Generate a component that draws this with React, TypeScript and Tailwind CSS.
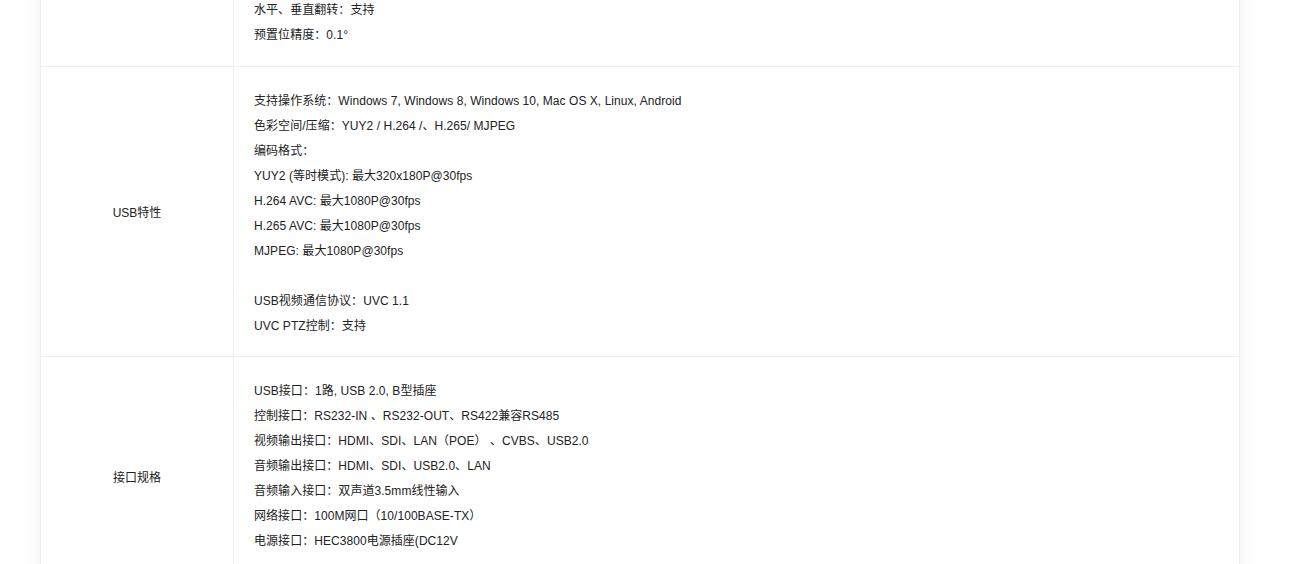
import React from "react";

type Row = { label: string; lines: string[] };

const rows: Row[] = [
  {
    label: "",
    lines: ["水平、垂直翻转：支持", "预置位精度：0.1°"],
  },
  {
    label: "USB特性",
    lines: [
      "支持操作系统：Windows 7, Windows 8, Windows 10, Mac OS X, Linux, Android",
      "色彩空间/压缩：YUY2 / H.264 /、H.265/ MJPEG",
      "编码格式：",
      "YUY2 (等时模式): 最大320x180P@30fps",
      "H.264 AVC: 最大1080P@30fps",
      "H.265 AVC: 最大1080P@30fps",
      "MJPEG: 最大1080P@30fps",
      "",
      "USB视频通信协议：UVC 1.1",
      "UVC PTZ控制：支持",
    ],
  },
  {
    label: "接口规格",
    lines: [
      "USB接口：1路, USB 2.0, B型插座",
      "控制接口：RS232-IN 、RS232-OUT、RS422兼容RS485",
      "视频输出接口：HDMI、SDI、LAN（POE） 、CVBS、USB2.0",
      "音频输出接口：HDMI、SDI、USB2.0、LAN",
      "音频输入接口：双声道3.5mm线性输入",
      "网络接口：100M网口（10/100BASE-TX）",
      "电源接口：HEC3800电源插座(DC12V",
      "",
    ],
  },
];

export default function App() {
  return (
    <div
      className="h-[564px] overflow-hidden bg-white text-[12px] text-[#222]"
      style={{ fontFamily: '"Liberation Sans", Arial, "Noto Sans CJK SC", sans-serif' }}
    >
      <div className="ml-[40px] -mt-[24px] w-[1200px] border-x border-[#eee] bg-white shadow-[0_0_20px_rgba(0,0,0,0.06)]">
        {rows.map((row, i) => (
          <div key={i} className="flex border-b border-[#eee]">
            <div className="flex w-[193px] shrink-0 items-center justify-center border-r border-[#eee] pt-[2px]">
              {row.label}
            </div>
            <div
              className={
                i === 1
                  ? "flex-1 pl-5 pt-[22px] pb-[17px] tracking-[0.05px]"
                  : "flex-1 pl-5 pt-[22px] pb-[18px] tracking-[0.05px]"
              }
            >
              {row.lines.map((line, j) => (
                <p key={j} className="h-[25px] leading-[25px]">
                  {line}
                </p>
              ))}
            </div>
          </div>
        ))}
      </div>
    </div>
  );
}
